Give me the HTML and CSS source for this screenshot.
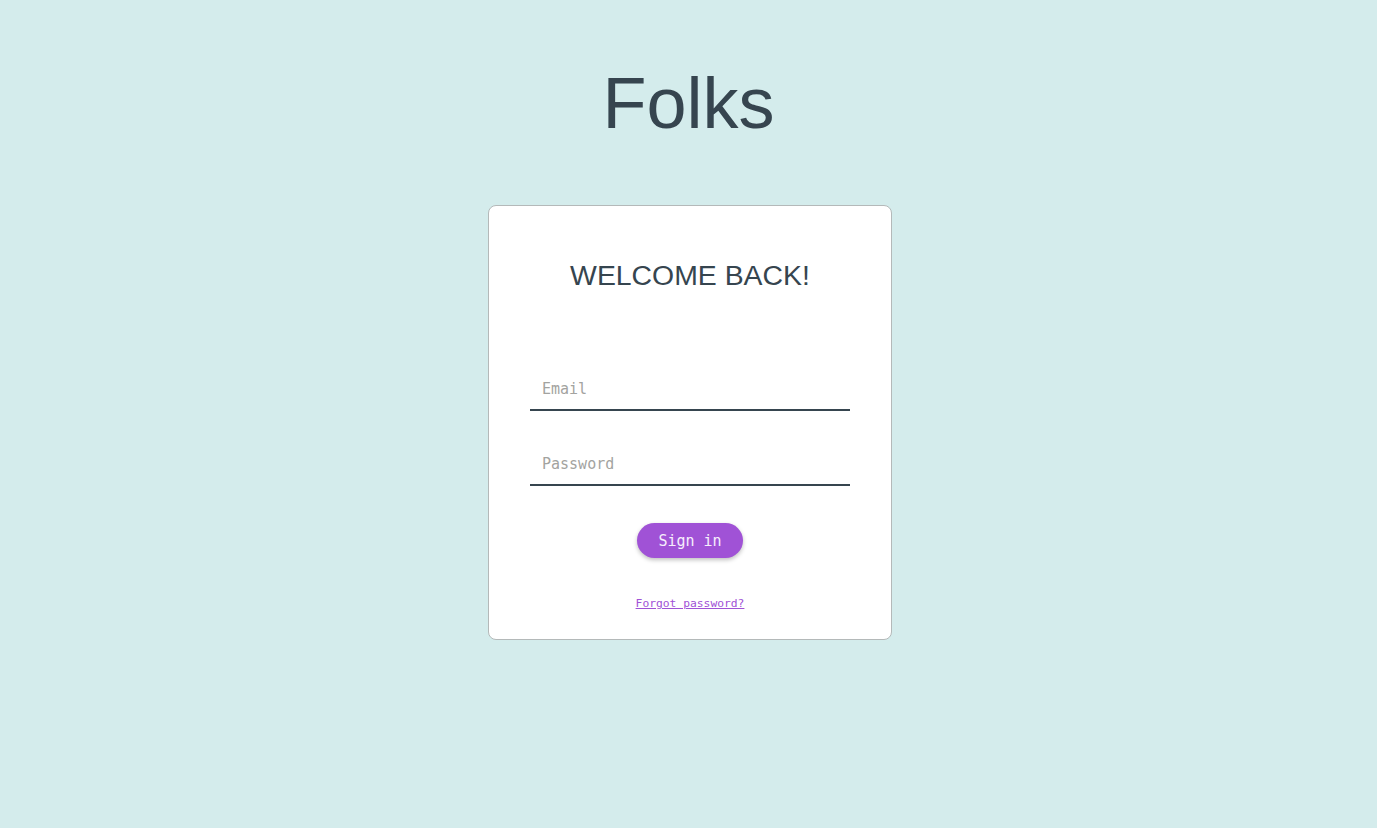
FILE: index.html
```html
<!DOCTYPE html>
<html lang="en">
<head>
<meta charset="utf-8">
<title>Folks</title>
<link rel="stylesheet" href="styles.css">
</head>
<body>
<main class="page">
  <h1 class="brand">Folks</h1>
  <form class="card">
    <h2 class="card-title">WELCOME BACK!</h2>
    <input class="field field-email" type="email" placeholder="Email">
    <input class="field field-password" type="password" placeholder="Password">
    <button class="btn" type="button">Sign in</button>
    <a class="forgot" href="#">Forgot password?</a>
  </form>
</main>
</body>
</html>
```
FILE: styles.css
```css
html, body {
  margin: 0;
  padding: 0;
  background: #d4ecec;
  height: 100%;
}
body {
  font-family: "Liberation Sans", Arial, sans-serif;
  color: #36454f;
}
.page {
  display: flex;
  flex-direction: column;
  align-items: center;
}
.brand {
  margin: 62px 0 61px;
  font-size: 72px;
  font-weight: 400;
  line-height: normal;
  color: #36454f;
}
.card {
  box-sizing: border-box;
  width: 404px;
  margin-left: 3px;
  background: #ffffff;
  border: 1px solid #b4b9b9;
  border-radius: 8px;
  padding: 53px 41px 28px 41px;
  display: flex;
  flex-direction: column;
  align-items: center;
}
.card-title {
  margin: 0 0 77px;
  font-size: 28.4px;
  font-weight: 400;
  line-height: normal;
  color: #36454f;
}
.field {
  display: block;
  box-sizing: border-box;
  width: 100%;
  height: 42px;
  padding: 0 12px;
  border: none;
  border-bottom: 2px solid #36454f;
  outline: none;
  background: transparent;
  font-family: "DejaVu Sans Mono", "Liberation Mono", monospace;
  font-size: 15px;
  color: #36454f;
}
.field::placeholder {
  color: #a3a3a0;
}
.field-email {
  margin-bottom: 33px;
}
.field-password {
  margin-bottom: 37px;
}
.btn {
  box-sizing: border-box;
  height: 35px;
  padding: 0 21px;
  border: none;
  border-radius: 18px;
  background: #a052d6;
  color: #f6eefc;
  font-family: "DejaVu Sans Mono", "Liberation Mono", monospace;
  font-size: 15px;
  box-shadow: 0 2px 4px rgba(0, 0, 0, 0.25);
  cursor: pointer;
  margin-bottom: 39px;
}
.forgot {
  font-family: "DejaVu Sans Mono", "Liberation Mono", monospace;
  font-size: 11.3px;
  line-height: 14px;
  color: #a052d6;
  text-decoration: underline;
}
```
